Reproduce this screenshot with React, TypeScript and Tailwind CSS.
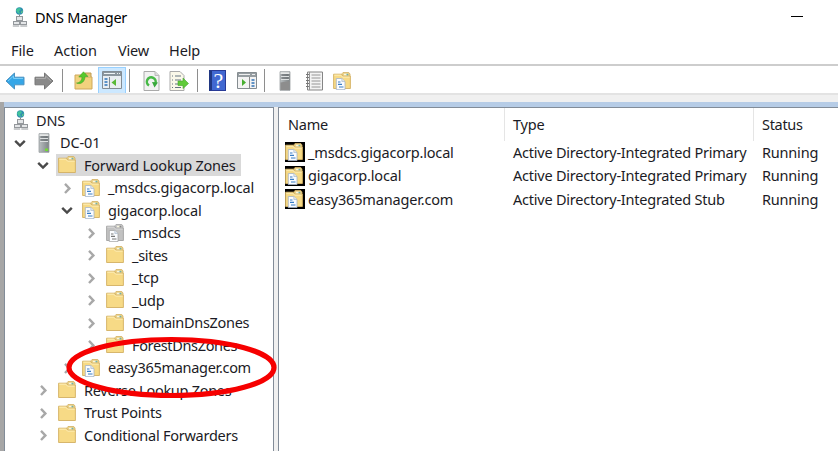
import type { ReactNode } from "react";

function Folder({ gray = false, doc = false, className = "" }: { gray?: boolean; doc?: boolean; className?: string }) {
  const front = gray ? "#c2c2c2" : "#f7da86";
  const edge = gray ? "#a2a2a2" : "#d3b062";
  const light = gray ? "#d9d9d9" : "#fdeeb8";
  return (
    <svg className={`shrink-0 ${className}`} width="18" height="18" viewBox="0 0 18 18">
      <path d="M9 3.5V1.5L10 .5H15.8L17 2V5H9Z" fill={gray ? "#c9c9c9" : "#ead28a"} stroke={edge} strokeWidth=".8" />
      <rect x="11" y="1.8" width="3" height="1.6" fill="#f8f6df" />
      <rect x="13.5" y="1.8" width="1.8" height="1.6" fill={gray ? "#888" : "#6fb0aa"} />
      <path d="M.6 2.2H8.2L9.8 4.2H17.4V16.5H.6Z" fill={front} stroke={edge} strokeWidth=".9" />
      <path d="M1.3 3.2H7.9L9.5 5.1H16.7" fill="none" stroke={light} />
      {doc && (
        <g>
          <path d="M3.3 6.5H8.8L12 9.5V17.6H3.3Z" fill="#fafcff" stroke={gray ? "#a5a5a5" : "#a3b3c6"} strokeWidth=".8" />
          <path d="M8.8 6.5V9.5H12" fill="#dce4ec" stroke="#a3b3c6" strokeWidth=".6" />
          <path d="M5 10H7.5M5 12.4H9M6 15H10.5" stroke={gray ? "#777" : "#387dc6"} strokeWidth="1.2" />
        </g>
      )}
    </svg>
  );
}

function Network({ className = "" }: { className?: string }) {
  return (
    <svg className={`shrink-0 ${className}`} width="16" height="20" viewBox="0 0 16 20">
      <circle cx="7.5" cy="4" r="3.7" fill="#2f8eb0" />
      <path d="M5 1.5L8 1 9 3 7 4 8 7 5.8 6 4 3.5Z" fill="#42c49b" />
      <path d="M9.5 4L11 3.6 10 6 8.8 6.3Z" fill="#65cd82" />
      <path d="M7.5 7.5V10" stroke="#888" />
      <g fill="#e4e6e8" stroke="#94989c" strokeWidth="1">
        <rect x="4.5" y="9.5" width="6" height="4" />
        <rect x="1.5" y="14.5" width="6" height="3" />
        <rect x="8.5" y="14.5" width="6" height="3" />
        <path d="M.8 19H7.2M8.3 19H15.2M4 13.5H11" />
      </g>
    </svg>
  );
}

function Server({ green = false }: { green?: boolean }) {
  return (
    <svg className="shrink-0" width="12" height="20" viewBox="0 0 12 20">
      <defs>
        <linearGradient id="server" x2="1">
          <stop stopColor="#b9bec0" /><stop offset="1" stopColor="#7d8386" />
        </linearGradient>
      </defs>
      <path d="M1 .7H11V19.3H1Z" fill="url(#server)" stroke="#999ea1" strokeWidth=".8" />
      <path d="M1.5 1.2H10.5V3H1.5Z" fill="#e6e8e8" />
      <path d="M2.5 4H9.5M2.5 7H9.5" stroke="#5b6164" strokeWidth="1.1" />
      <path d="M2 5.5H10M2 8.5H10" stroke="#dde0e1" />
      {green ? <rect x="7" y="15.5" width="3" height="2.5" fill="#73dc35" /> : <path d="M1.5 11.5L10.5 10V19H1.5Z" fill="#8d8d8d" />}
    </svg>
  );
}

function Chevron({ open }: { open: boolean }) {
  return (
    <svg className="shrink-0" width="12" height="12" viewBox="0 0 12 12">
      <path d={open ? "M1.2 3.8L6 8.6L10.8 3.8" : "M4 1.8L8.4 6.4L4 11"} fill="none" stroke={open ? "#4a4a4a" : "#a8a8a8"} strokeWidth="2.4" />
    </svg>
  );
}

function TreeRow({ indent, open, icon, label, selected = false, tracking }: {
  indent: string; open: boolean; icon: ReactNode; label: string; selected?: boolean; tracking: string;
}) {
  return (
    <div className={`flex h-[22.5px] shrink-0 items-center ${indent}`}>
      <Chevron open={open} />
      <div className={`ml-[7px] flex h-[22px] items-center gap-[8px] whitespace-nowrap pl-[2px] pr-[5px] ${selected ? "bg-[#d9d9d9]" : ""}`}>
        {icon}
        <span className={`-mt-px ${tracking}`}>{label}</span>
      </div>
    </div>
  );
}

const zones = [
  { name: "_msdcs.gigacorp.local", type: "Active Directory-Integrated Primary" },
  { name: "gigacorp.local", type: "Active Directory-Integrated Primary" },
  { name: "easy365manager.com", type: "Active Directory-Integrated Stub" },
];

function Divider({ className }: { className: string }) {
  return <div className={`h-[23px] w-px shrink-0 bg-[#8e8e8e] ${className}`} />;
}

function Toolbar() {
  return (
    <div className="flex h-[27px] shrink-0 items-center bg-white pl-[5px] pt-[2px]">
      <svg width="20" height="18" viewBox="0 0 20 18">
        <path d="M1 9L9.5 1V5.2H19V12.8H9.5V17Z" fill="#35a6e7" stroke="#4c93c2" />
        <path d="M3 9L8.5 4V6.5H18" fill="none" stroke="#78cef7" />
      </svg>
      <svg className="ml-[9px]" width="20" height="18" viewBox="0 0 20 18">
        <path d="M19 9L10.5 1V5.2H1V12.8H10.5V17Z" fill="#8a8a8a" stroke="#777" />
        <path d="M17 9L11.5 4V6.5H2" fill="none" stroke="#aaa" />
      </svg>
      <Divider className="ml-[8px]" />
      <svg className="ml-[11px]" width="19" height="19" viewBox="0 0 19 19">
        <path d="M1 4H8L10 6H18V18H1Z" fill="#f2d27e" stroke="#cfa85c" />
        <path d="M11 5V2H17V6" fill="#e6c576" stroke="#c09c55" />
        <path d="M2.5 12C5.5 12 8 9.5 8 6H4.8L9.5.8 14 5.5H11C11 10 7.5 14 2.5 12Z" fill="#57c92d" stroke="#41a323" strokeWidth=".6" />
      </svg>
      <div className="-mt-px ml-[5px] flex h-[27px] w-[28px] shrink-0 items-center justify-center border border-[#99d1ff] bg-[#cce8ff]">
        <svg width="20" height="18" viewBox="0 0 20 18">
          <path d="M.5.5H19.5V17.5H.5Z" fill="#e9eef2" stroke="#828c94" />
          <path d="M1 1H19V5H1Z" fill="#8b969e" /><path d="M2 2.5H13M15 2.5H16M17 2.5H18" stroke="#eef4f7" />
          <path d="M7.5 6V17" stroke="#7f8a91" /><path d="M2.5 8H5.5M2.5 11H5.5M2.5 14H5.5" stroke="#2d74b9" strokeWidth="1.5" />
          <path d="M14 8V15L9.5 11.5Z" fill="#58b938" />
        </svg>
      </div>
      <Divider className="ml-[3px]" />
      <svg className="ml-[13px]" width="17" height="20" viewBox="0 0 17 20">
        <path d="M1 .5H12L16 4.5V19.5H1Z" fill="#f2f2f2" stroke="#aaa" />
        <path d="M12 .5V4.5H16" fill="#ddd" stroke="#bbb" />
        <path d="M6 14.5A4.4 4.4 0 1 1 12.3 12.5" fill="none" stroke="#47b947" strokeWidth="2.5" />
        <path d="M9 11L15 11.5 11.5 16.5Z" fill="#39a83c" />
      </svg>
      <svg className="ml-[9px]" width="20" height="20" viewBox="0 0 20 20">
        <path d="M1 .5H11L15 4.5V19.5H1Z" fill="#faf8e9" stroke="#aaa" />
        <path d="M3 5H4M6 5H12M3 9H4M6 9H12M3 13H4M6 13H11M3 16.5H4M6 16.5H12" stroke="#647482" />
        <path d="M9 10H14V7L19.5 12.5 14 17.5V14.5H9Z" fill="#61cb39" stroke="#43a52b" strokeWidth=".6" />
      </svg>
      <Divider className="ml-[8px]" />
      <div className="ml-[11px] flex h-[21px] w-[17px] items-center justify-center border border-l-[3px] border-[#283a96] border-l-[#203782] bg-[#4168d1] font-['Liberation_Serif',serif] text-[22px] leading-none text-white">?</div>
      <svg className="ml-[11px]" width="20" height="17" viewBox="0 0 20 17">
        <path d="M.5.5H19.5V16.5H.5Z" fill="#f3f3f3" stroke="#858c90" />
        <path d="M1 1H19V5H1Z" fill="#969da1" /><path d="M2 2.5H13M15 2.5H18" stroke="#eee" />
        <path d="M12.5 5V16" stroke="#888" /><path d="M5 7V14L9 10.5Z" fill="#48ae30" />
        <path d="M14.5 8H17.5M14.5 11H17.5M14.5 14H17.5" stroke="#3273b6" strokeWidth="1.5" />
      </svg>
      <Divider className="ml-[7px]" />
      <div className="ml-[14px]"><Server /></div>
      <svg className="ml-[14px]" width="19" height="20" viewBox="0 0 19 20">
        <path d="M2.5 1H17.5V19H2.5Z" fill="#f3f3f3" stroke="#858585" />
        <path d="M4.5 1V19M6.5 4H15.5M6.5 7H15.5M6.5 10H15.5M6.5 13H15.5M6.5 16H15.5" stroke="#969696" />
        <path d="M1 3.5H4M1 6.5H4M1 9.5H4M1 12.5H4M1 15.5H4" stroke="#777" />
      </svg>
      <Folder doc className="ml-[9px]" />
    </div>
  );
}

export default function App() {
  return (
    <div className="relative flex h-[451px] w-[838px] flex-col overflow-hidden bg-white font-['Noto_Sans','Open_Sans',sans-serif] text-[14.5px] leading-[20px] text-[#1b1b25]">
      <header className="flex h-[34px] shrink-0 items-center justify-between pl-[12px] pr-[35px] text-black">
        <div className="flex items-center gap-[7px]">
          <Network />
          <span className="tracking-[-0.25px]">DNS Manager</span>
        </div>
        <div className="-mt-px h-px w-[12px] bg-black" />
      </header>
      <nav className="flex h-[30px] shrink-0 items-center pl-[11px] pt-px">
        <span className="w-[43px] tracking-[-0.1px]">File</span>
        <span className="w-[64px] tracking-[0px]">Action</span>
        <span className="w-[51px] tracking-[-0.2px]">View</span>
        <span className="tracking-[-0.1px]">Help</span>
      </nav>
      <div className="h-[2px] shrink-0 bg-[#cdcdcd]" />
      <Toolbar />
      <div className="h-[2px] shrink-0 bg-[#e3e3e3]" />
      <div className="h-[7px] shrink-0 bg-[#f0f0f0]" />
      <main className="flex min-h-0 flex-1 border-l-4 border-[#a6a6a6]">
        <div className="flex min-w-0 flex-1 flex-col">
          <div className="h-[5px] shrink-0 bg-[#b6cce6]" />
          <div className="flex min-h-0 flex-1">
            <section className="w-[270px] shrink-0 border-l border-r border-t border-[#828c98] pt-px">
              <div className="flex h-[22.5px] items-center gap-[7px] pl-[8px]">
                <Network />
                <span className="-mt-px tracking-[-0.2px]">DNS</span>
              </div>
              <TreeRow indent="pl-[9px]" open icon={<span className="ml-[3px] mr-[2px]"><Server green /></span>} label="DC-01" tracking="tracking-[-0.1px]" />
              <TreeRow indent="pl-[32px]" open selected icon={<Folder />} label="Forward Lookup Zones" tracking="tracking-[-0.22px]" />
              <TreeRow indent="pl-[56px]" open={false} icon={<Folder doc />} label="_msdcs.gigacorp.local" tracking="tracking-[-0.15px]" />
              <TreeRow indent="pl-[56px]" open icon={<Folder doc />} label="gigacorp.local" tracking="tracking-[-0.15px]" />
              <TreeRow indent="pl-[80px]" open={false} icon={<Folder doc gray />} label="_msdcs" tracking="tracking-[-0.2px]" />
              <TreeRow indent="pl-[80px]" open={false} icon={<Folder />} label="_sites" tracking="tracking-[-0.3px]" />
              <TreeRow indent="pl-[80px]" open={false} icon={<Folder />} label="_tcp" tracking="tracking-[-0.2px]" />
              <TreeRow indent="pl-[80px]" open={false} icon={<Folder />} label="_udp" tracking="tracking-[-0.2px]" />
              <TreeRow indent="pl-[80px]" open={false} icon={<Folder />} label="DomainDnsZones" tracking="tracking-[-0.3px]" />
              <TreeRow indent="pl-[80px]" open={false} icon={<Folder />} label="ForestDnsZones" tracking="tracking-[-0.35px]" />
              <TreeRow indent="pl-[56px]" open={false} icon={<Folder doc />} label="easy365manager.com" tracking="tracking-[-0.3px]" />
              <TreeRow indent="pl-[32px]" open={false} icon={<Folder />} label="Reverse Lookup Zones" tracking="tracking-[-0.28px]" />
              <TreeRow indent="pl-[32px]" open={false} icon={<Folder />} label="Trust Points" tracking="tracking-[-0.25px]" />
              <TreeRow indent="pl-[32px]" open={false} icon={<Folder />} label="Conditional Forwarders" tracking="tracking-[-0.25px]" />
            </section>
            <div className="w-[4px] shrink-0 bg-[#f0f0f0]" />
            <section className="flex-1 border-l border-t border-[#828c98]">
              <div className="grid h-[32.5px] grid-cols-[226px_249px_1fr] items-stretch">
                <div className="border-r border-[#e5e5e5] pl-[9px] pt-[6px] tracking-[-0.2px]">Name</div>
                <div className="border-r border-[#e5e5e5] pl-[8px] pt-[6px] tracking-[-0.2px]">Type</div>
                <div className="pl-[8px] pt-[6px] tracking-[-0.3px]">Status</div>
              </div>
              {zones.map((z) => (
                <div key={z.name} className="grid h-[23.6px] grid-cols-[226px_249px_1fr] items-center">
                  <div className="flex items-center gap-[3px] pl-[6px]">
                    <div className="flex h-[20px] w-[20px] items-center bg-black"><Folder doc /></div>
                    <span className="-mt-px tracking-[-0.17px]">{z.name}</span>
                  </div>
                  <span className="-mt-px whitespace-nowrap pl-[8px] tracking-[-0.23px]">{z.type}</span>
                  <span className="-mt-px pl-[8px] tracking-[-0.2px]">Running</span>
                </div>
              ))}
            </section>
          </div>
        </div>
      </main>
      <svg className="pointer-events-none absolute left-[64px] top-[335px]" width="216" height="66" viewBox="0 0 216 66">
        <ellipse cx="107.5" cy="32.5" rx="102.5" ry="28" fill="none" stroke="#f60000" strokeWidth="5.2" />
      </svg>
    </div>
  );
}
